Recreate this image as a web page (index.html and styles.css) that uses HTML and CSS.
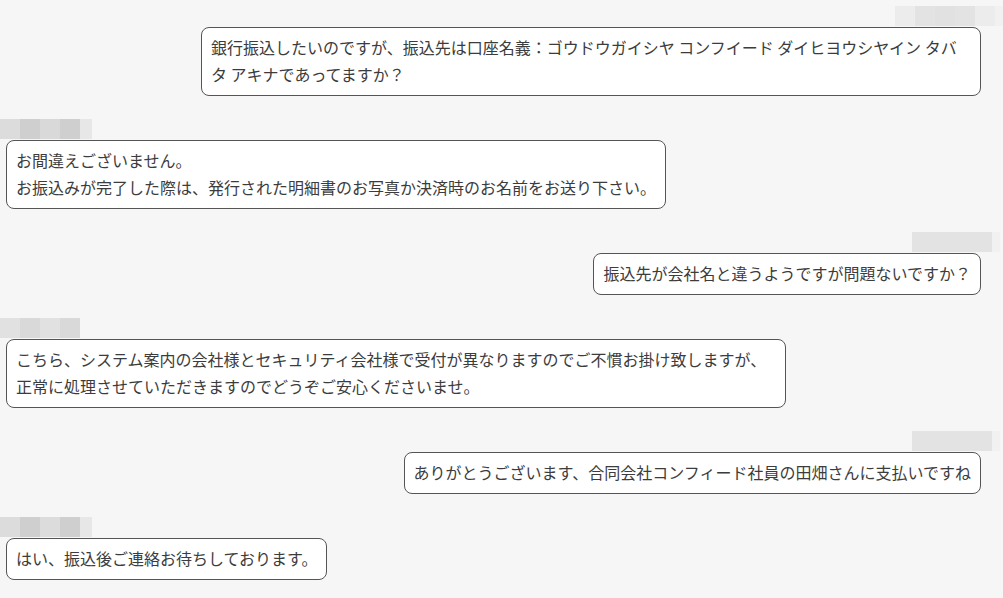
FILE: index.html
```html
<!DOCTYPE html>
<html lang="ja">
<head>
<meta charset="utf-8">
<title>チャット</title>
<link rel="stylesheet" href="styles.css">
</head>
<body>
<div class="chat">
  <div class="msg msg-right first">
    <div class="name name-r1"><span class="s1"></span><span class="s2"></span><span class="s3"></span><span class="s2"></span><span class="s1"></span><span class="s0 tail"></span></div>
    <div class="bubble">銀行振込したいのですが、振込先は口座名義：ゴウドウガイシヤ コンフイード ダイヒヨウシヤイン タバタ アキナであってますか？</div>
  </div>
  <div class="msg msg-left">
    <div class="name name-l1"><span class="d2"></span><span class="d4"></span><span class="d3"></span><span class="d4"></span><span class="d1 tail"></span></div>
    <div class="bubble">お間違えございません。<br>お振込みが完了した際は、発行された明細書のお写真か決済時のお名前をお送り下さい。</div>
  </div>
  <div class="msg msg-right">
    <div class="name name-r2"><span class="s2"></span><span class="s2"></span><span class="s2"></span><span class="s2"></span><span class="s0 tail"></span></div>
    <div class="bubble">振込先が会社名と違うようですが問題ないですか？</div>
  </div>
  <div class="msg msg-left">
    <div class="name name-l2"><span class="s3"></span><span class="d3"></span><span class="s3"></span><span class="d3"></span></div>
    <div class="bubble">こちら、システム案内の会社様とセキュリティ会社様で受付が異なりますのでご不慣お掛け致しますが、正常に処理させていただきますのでどうぞご安心くださいませ。</div>
  </div>
  <div class="msg msg-right">
    <div class="name name-r2"><span class="s2"></span><span class="s2"></span><span class="s2"></span><span class="s2"></span><span class="s0 tail"></span></div>
    <div class="bubble">ありがとうございます、合同会社コンフィード社員の田畑さんに支払いですね</div>
  </div>
  <div class="msg msg-left">
    <div class="name name-l1"><span class="d2"></span><span class="d4"></span><span class="d2"></span><span class="d4"></span><span class="d1 tail"></span></div>
    <div class="bubble">はい、振込後ご連絡お待ちしております。</div>
  </div>
</div>
</body>
</html>
```
FILE: styles.css
```css
html, body {
  margin: 0;
  padding: 0;
  background: #f6f6f6;
}
body {
  font-family: "Noto Sans CJK JP", "Noto Sans", sans-serif;
  color: #3c3c3c;
  font-size: 16px;
}
.chat {
  display: flex;
  flex-direction: column;
  gap: 23px;
  padding: 6px 22px 0 6px;
}
.msg {
  display: flex;
  flex-direction: column;
}
.msg-right {
  align-items: flex-end;
}
.msg-left {
  align-items: flex-start;
}
.name {
  display: flex;
  height: 20px;
  margin-bottom: 1px;
}
.name span {
  width: 20px;
  height: 100%;
}
.name span.tail {
  width: 8px;
}
.msg-right .name {
  margin-right: -22px;
}
.msg-left .name {
  margin-left: -6px;
}
.name-r2 {
  padding-right: 3px;
}
.name-l1 span.tail {
  width: 12px;
}
.s0 { background: #f1f1f1; }
.s1 { background: #ececec; }
.s2 { background: #e3e3e3; }
.s3 { background: #e1e1e1; }
.d1 { background: #e7e7e7; }
.d2 { background: #dcdcdc; }
.d3 { background: #d9d9d9; }
.d4 { background: #cfcfcf; }
.bubble {
  box-sizing: border-box;
  max-width: 780px;
  background: #ffffff;
  border: 1px solid #555555;
  border-radius: 8px;
  padding: 6px 9px 7px 9px;
  line-height: 27px;
}
```
